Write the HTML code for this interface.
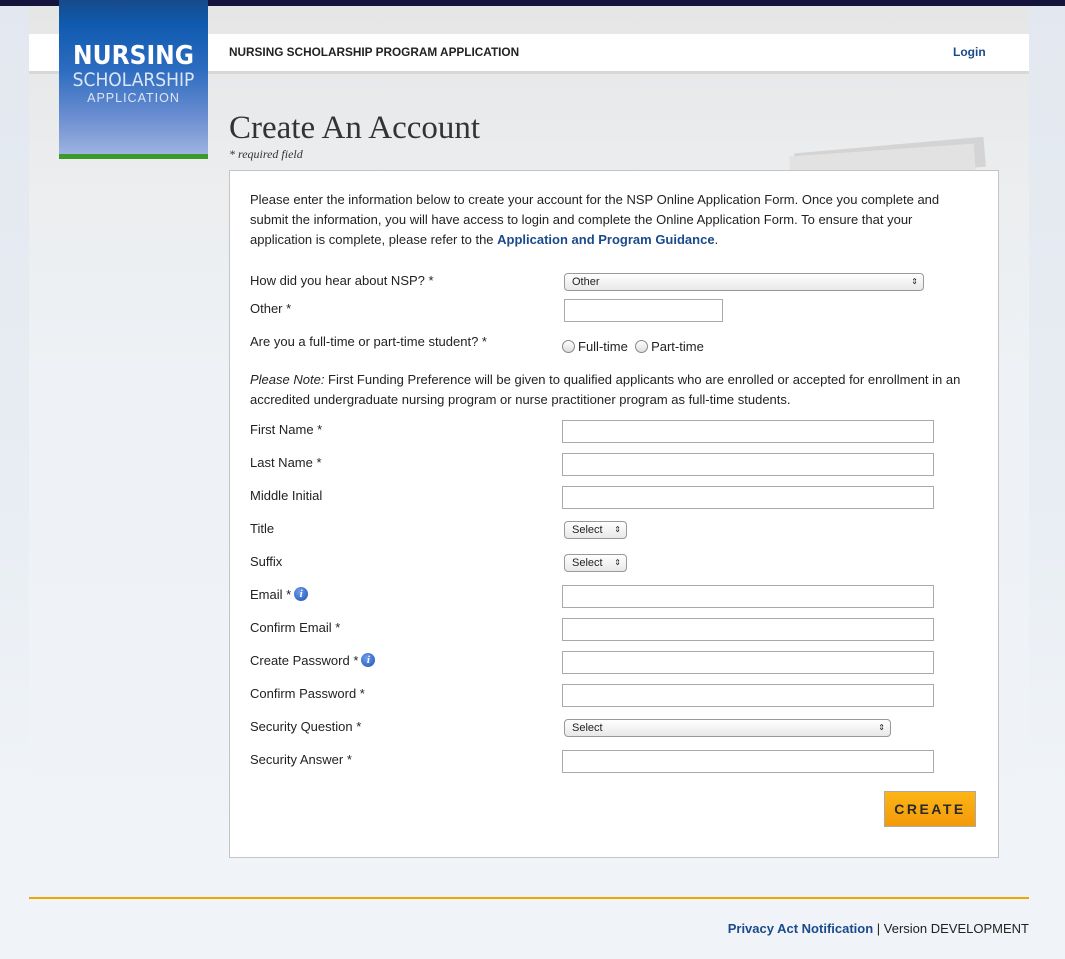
<!DOCTYPE html>
<html><head><style>
body{margin:0;width:1065px;height:959px;position:relative;overflow:hidden;font-family:"Liberation Sans",Arial,sans-serif;font-size:13px;color:#222;background:linear-gradient(#e3e8f0 0,#e8edf3 500px,#f0f4f8 800px,#f0f4f8 100%);}
.a{position:absolute}
.col{left:29px;top:6px;width:1000px;height:953px;background:linear-gradient(#e6e6e6 0,#eceef0 200px,#eef2f6 400px,#f0f4f8 100%)}
.inp{position:absolute;left:562px;width:370px;height:21px;border:1px solid #aaa;background:#fff}
.sel{position:absolute;border:1px solid #999;border-radius:4px;background:linear-gradient(#fff,#e8e8e8);font-size:11px;line-height:16px;padding-left:7px;box-sizing:border-box;height:18px}
.sel:after{content:"⇕";position:absolute;right:5px;top:0;font-size:8px}
.lbl{position:absolute;left:250px}
.info{display:inline-block;width:14px;height:14px;border-radius:50%;background:radial-gradient(circle at 40% 35%,#6fa0e8,#1d4fb8);color:#fff;font:italic bold 11px "Liberation Serif",serif;text-align:center;line-height:14px;vertical-align:2px;margin-left:3px}
.rad{display:inline-block;width:11px;height:11px;border:1px solid #888;border-radius:50%;background:linear-gradient(#fff,#ddd);vertical-align:-2px;margin-right:3px}
a{color:#1a4a8c;font-weight:bold;text-decoration:none}
</style></head><body>
<div class="a" style="left:0;top:0;width:1065px;height:6px;background:#14143c"></div>
<div class="a col"></div>
<div class="a" style="left:29px;top:34px;width:1000px;height:37px;background:#fff;border-bottom:3px solid #d8d8d8"></div>
<div class="a" style="left:229px;top:45px;font-size:11.8px;font-weight:bold;color:#222">NURSING SCHOLARSHIP PROGRAM APPLICATION</div>
<div class="a" style="left:953px;top:45px;font-size:12px"><a>Login</a></div>
<div class="a" style="left:59px;top:0;width:149px;height:154px;background:linear-gradient(#174a8a 0,#0f5bb0 25px,#2d6cc0 70px,#6f90d2 120px,#9fb3e0 154px);border-bottom:5px solid #3a9a2a;text-align:center;color:#fff">
<div style="margin-top:41px;font:bold 26px 'DejaVu Sans Condensed','Liberation Sans',sans-serif">NURSING</div>
<div style="font:19px 'DejaVu Sans Condensed','Liberation Sans',sans-serif;color:#dde6f4;margin-top:-2px">SCHOLARSHIP</div>
<div style="font:12.5px 'Liberation Sans',sans-serif;letter-spacing:1px;color:#dde6f4">APPLICATION</div></div>
<div class="a" style="left:229px;top:110px;font:33px 'Liberation Serif',serif;color:#333">Create An Account</div>
<div class="a" style="left:229px;top:147px;font:italic 12px 'Liberation Serif',serif;color:#333">* required field</div>
<div class="a" style="left:795px;top:145px;width:190px;height:30px;background:#d4d4d4;transform:rotate(-5deg)"></div>
<div class="a" style="left:790px;top:150px;width:185px;height:30px;background:#e2e2e2;transform:rotate(-4deg)"></div>
<div class="a" style="left:229px;top:170px;width:768px;height:686px;background:#fff;border:1px solid #c4c4c4"></div>
<div class="a" style="left:250px;top:190px;width:718px;line-height:20px">Please enter the information below to create your account for the NSP Online Application Form. Once you complete and submit the information, you will have access to login and complete the Online Application Form. To ensure that your application is complete, please refer to the <a>Application and Program Guidance</a>.</div>
<div class="lbl" style="top:273px">How did you hear about NSP? *</div>
<div class="sel a" style="left:564px;top:273px;width:360px">Other</div>
<div class="lbl" style="top:301px">Other *</div>
<div class="inp" style="left:564px;top:299px;width:157px"></div>
<div class="lbl" style="top:334px">Are you a full-time or part-time student? *</div>
<div class="a" style="left:562px;top:339px"><span class="rad"></span>Full-time &nbsp;<span class="rad"></span>Part-time</div>
<div class="a" style="left:250px;top:370px;width:730px;line-height:20px"><i>Please Note:</i> First Funding Preference will be given to qualified applicants who are enrolled or accepted for enrollment in an accredited undergraduate nursing program or nurse practitioner program as full-time students.</div>
<div class="lbl" style="top:422px">First Name *</div><div class="inp" style="top:420px"></div>
<div class="lbl" style="top:455px">Last Name *</div><div class="inp" style="top:453px"></div>
<div class="lbl" style="top:488px">Middle Initial</div><div class="inp" style="top:486px"></div>
<div class="lbl" style="top:521px">Title</div><div class="sel a" style="left:564px;top:521px;width:63px">Select</div>
<div class="lbl" style="top:554px">Suffix</div><div class="sel a" style="left:564px;top:554px;width:63px">Select</div>
<div class="lbl" style="top:587px">Email *<span class="info">i</span></div><div class="inp" style="top:585px"></div>
<div class="lbl" style="top:620px">Confirm Email *</div><div class="inp" style="top:618px"></div>
<div class="lbl" style="top:653px">Create Password *<span class="info">i</span></div><div class="inp" style="top:651px"></div>
<div class="lbl" style="top:686px">Confirm Password *</div><div class="inp" style="top:684px"></div>
<div class="lbl" style="top:719px">Security Question *</div><div class="sel a" style="left:564px;top:719px;width:327px">Select</div>
<div class="lbl" style="top:752px">Security Answer *</div><div class="inp" style="top:750px"></div>
<div class="a" style="left:884px;top:791px;width:90px;height:34px;border:1px solid #aaa;background:linear-gradient(#fdb515,#f39a0a);text-align:center;line-height:34px;font-weight:bold;font-size:14px;letter-spacing:2.5px;color:#2a2a2a">CREATE</div>
<div class="a" style="left:29px;top:897px;width:1000px;height:0;border-top:2px solid #eba800"></div>
<div class="a" style="right:36px;top:921px;font-size:13px"><a>Privacy Act Notification</a> | Version DEVELOPMENT</div>
</body></html>
